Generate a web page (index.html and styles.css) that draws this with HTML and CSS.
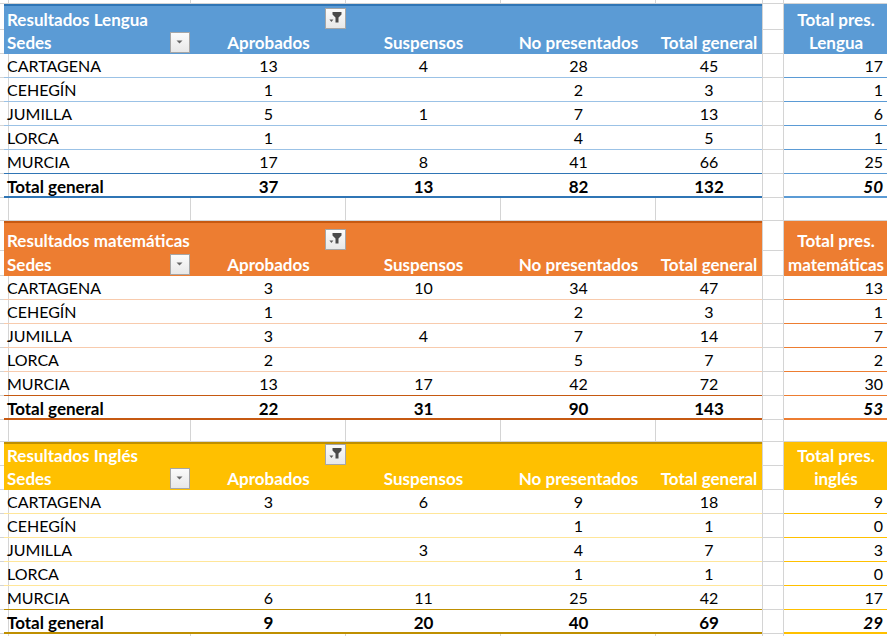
FILE: index.html
```html
<!DOCTYPE html>
<html lang="es">
<head>
<meta charset="utf-8">
<title>Resultados por sedes</title>
<link rel="stylesheet" href="styles.css">
</head>
<body>
<div class="sheet">
  <div class="row r-top">
    <div class="cell grid"></div><div class="cell grid"></div><div class="cell grid"></div><div class="cell grid"></div><div class="cell grid"></div><div class="cell grid nr"></div><div class="cell gap"></div><div class="cell grid nr"></div>
  </div>

  <section class="pivot blue">
    <div class="row r-title">
      <div class="cell grid"></div>
      <div class="cell hd title"><span>Resultados Lengua</span><span class="filter-btn"><svg viewBox="0 0 19 19" width="19" height="19"><path d="M6.5 3h9v2.6l-3 3v4.9h-3V8.6l-3-3z" fill="#4a4a4a"/><path d="M3.4 10.6h4l-2 2.4z" fill="#5a5a5a"/></svg></span></div>
      <div class="cell hd"></div><div class="cell hd"></div><div class="cell hd"></div>
      <div class="cell gap"></div>
      <div class="cell hd side">Total pres.</div>
    </div>
    <div class="row r-head">
      <div class="cell grid"></div>
      <div class="cell hd sedes"><span>Sedes</span><span class="drop-btn"><svg viewBox="0 0 18 19" width="18" height="19"><path d="M5.5 7.5h6l-3 3z" fill="#666"/></svg></span></div>
      <div class="cell hd">Aprobados</div>
      <div class="cell hd">Suspensos</div>
      <div class="cell hd">No presentados</div>
      <div class="cell hd">Total general</div>
      <div class="cell gap"></div>
      <div class="cell hd side">Lengua</div>
    </div>
    <div class="row">
      <div class="cell grid"></div><div class="cell d name">CARTAGENA</div><div class="cell d">13</div><div class="cell d">4</div><div class="cell d">28</div><div class="cell d">45</div><div class="cell gap"></div><div class="cell d tp">17</div>
    </div>
    <div class="row">
      <div class="cell grid"></div><div class="cell d name">CEHEGÍN</div><div class="cell d">1</div><div class="cell d"></div><div class="cell d">2</div><div class="cell d">3</div><div class="cell gap"></div><div class="cell d tp">1</div>
    </div>
    <div class="row">
      <div class="cell grid"></div><div class="cell d name">JUMILLA</div><div class="cell d">5</div><div class="cell d">1</div><div class="cell d">7</div><div class="cell d">13</div><div class="cell gap"></div><div class="cell d tp">6</div>
    </div>
    <div class="row">
      <div class="cell grid"></div><div class="cell d name">LORCA</div><div class="cell d">1</div><div class="cell d"></div><div class="cell d">4</div><div class="cell d">5</div><div class="cell gap"></div><div class="cell d tp">1</div>
    </div>
    <div class="row last">
      <div class="cell grid"></div><div class="cell d name">MURCIA</div><div class="cell d">17</div><div class="cell d">8</div><div class="cell d">41</div><div class="cell d">66</div><div class="cell gap"></div><div class="cell d tp">25</div>
    </div>
    <div class="row total">
      <div class="cell grid"></div><div class="cell d name">Total general</div><div class="cell d">37</div><div class="cell d">13</div><div class="cell d">82</div><div class="cell d">132</div><div class="cell gap"></div><div class="cell d tp">50</div>
    </div>
  </section>

  <div class="row r-blank">
    <div class="cell grid"></div><div class="cell grid"></div><div class="cell grid"></div><div class="cell grid"></div><div class="cell grid"></div><div class="cell grid nr"></div><div class="cell gap"></div><div class="cell grid nr"></div>
  </div>

  <section class="pivot orange">
    <div class="row r-title">
      <div class="cell grid"></div>
      <div class="cell hd title"><span>Resultados matemáticas</span><span class="filter-btn"><svg viewBox="0 0 19 19" width="19" height="19"><path d="M6.5 3h9v2.6l-3 3v4.9h-3V8.6l-3-3z" fill="#4a4a4a"/><path d="M3.4 10.6h4l-2 2.4z" fill="#5a5a5a"/></svg></span></div>
      <div class="cell hd"></div><div class="cell hd"></div><div class="cell hd"></div>
      <div class="cell gap"></div>
      <div class="cell hd side">Total pres.</div>
    </div>
    <div class="row r-head">
      <div class="cell grid"></div>
      <div class="cell hd sedes"><span>Sedes</span><span class="drop-btn"><svg viewBox="0 0 18 19" width="18" height="19"><path d="M5.5 7.5h6l-3 3z" fill="#666"/></svg></span></div>
      <div class="cell hd">Aprobados</div>
      <div class="cell hd">Suspensos</div>
      <div class="cell hd">No presentados</div>
      <div class="cell hd">Total general</div>
      <div class="cell gap"></div>
      <div class="cell hd side">matemáticas</div>
    </div>
    <div class="row">
      <div class="cell grid"></div><div class="cell d name">CARTAGENA</div><div class="cell d">3</div><div class="cell d">10</div><div class="cell d">34</div><div class="cell d">47</div><div class="cell gap"></div><div class="cell d tp">13</div>
    </div>
    <div class="row">
      <div class="cell grid"></div><div class="cell d name">CEHEGÍN</div><div class="cell d">1</div><div class="cell d"></div><div class="cell d">2</div><div class="cell d">3</div><div class="cell gap"></div><div class="cell d tp">1</div>
    </div>
    <div class="row">
      <div class="cell grid"></div><div class="cell d name">JUMILLA</div><div class="cell d">3</div><div class="cell d">4</div><div class="cell d">7</div><div class="cell d">14</div><div class="cell gap"></div><div class="cell d tp">7</div>
    </div>
    <div class="row">
      <div class="cell grid"></div><div class="cell d name">LORCA</div><div class="cell d">2</div><div class="cell d"></div><div class="cell d">5</div><div class="cell d">7</div><div class="cell gap"></div><div class="cell d tp">2</div>
    </div>
    <div class="row last">
      <div class="cell grid"></div><div class="cell d name">MURCIA</div><div class="cell d">13</div><div class="cell d">17</div><div class="cell d">42</div><div class="cell d">72</div><div class="cell gap"></div><div class="cell d tp">30</div>
    </div>
    <div class="row total">
      <div class="cell grid"></div><div class="cell d name">Total general</div><div class="cell d">22</div><div class="cell d">31</div><div class="cell d">90</div><div class="cell d">143</div><div class="cell gap"></div><div class="cell d tp">53</div>
    </div>
  </section>

  <div class="row r-blank short">
    <div class="cell grid"></div><div class="cell grid"></div><div class="cell grid"></div><div class="cell grid"></div><div class="cell grid"></div><div class="cell grid nr"></div><div class="cell gap"></div><div class="cell grid nr"></div>
  </div>

  <section class="pivot gold">
    <div class="row r-title">
      <div class="cell grid"></div>
      <div class="cell hd title"><span>Resultados Inglés</span><span class="filter-btn"><svg viewBox="0 0 19 19" width="19" height="19"><path d="M6.5 3h9v2.6l-3 3v4.9h-3V8.6l-3-3z" fill="#4a4a4a"/><path d="M3.4 10.6h4l-2 2.4z" fill="#5a5a5a"/></svg></span></div>
      <div class="cell hd"></div><div class="cell hd"></div><div class="cell hd"></div>
      <div class="cell gap"></div>
      <div class="cell hd side">Total pres.</div>
    </div>
    <div class="row r-head">
      <div class="cell grid"></div>
      <div class="cell hd sedes"><span>Sedes</span><span class="drop-btn"><svg viewBox="0 0 18 19" width="18" height="19"><path d="M5.5 7.5h6l-3 3z" fill="#666"/></svg></span></div>
      <div class="cell hd">Aprobados</div>
      <div class="cell hd">Suspensos</div>
      <div class="cell hd">No presentados</div>
      <div class="cell hd">Total general</div>
      <div class="cell gap"></div>
      <div class="cell hd side">inglés</div>
    </div>
    <div class="row">
      <div class="cell grid"></div><div class="cell d name">CARTAGENA</div><div class="cell d">3</div><div class="cell d">6</div><div class="cell d">9</div><div class="cell d">18</div><div class="cell gap"></div><div class="cell d tp">9</div>
    </div>
    <div class="row">
      <div class="cell grid"></div><div class="cell d name">CEHEGÍN</div><div class="cell d"></div><div class="cell d"></div><div class="cell d">1</div><div class="cell d">1</div><div class="cell gap"></div><div class="cell d tp">0</div>
    </div>
    <div class="row">
      <div class="cell grid"></div><div class="cell d name">JUMILLA</div><div class="cell d"></div><div class="cell d">3</div><div class="cell d">4</div><div class="cell d">7</div><div class="cell gap"></div><div class="cell d tp">3</div>
    </div>
    <div class="row">
      <div class="cell grid"></div><div class="cell d name">LORCA</div><div class="cell d"></div><div class="cell d"></div><div class="cell d">1</div><div class="cell d">1</div><div class="cell gap"></div><div class="cell d tp">0</div>
    </div>
    <div class="row last">
      <div class="cell grid"></div><div class="cell d name">MURCIA</div><div class="cell d">6</div><div class="cell d">11</div><div class="cell d">25</div><div class="cell d">42</div><div class="cell gap"></div><div class="cell d tp">17</div>
    </div>
    <div class="row total">
      <div class="cell grid"></div><div class="cell d name">Total general</div><div class="cell d">9</div><div class="cell d">20</div><div class="cell d">40</div><div class="cell d">69</div><div class="cell gap"></div><div class="cell d tp">29</div>
    </div>
  </section>

  <div class="row r-tail">
    <div class="cell grid"></div><div class="cell grid"></div><div class="cell grid"></div><div class="cell grid"></div><div class="cell grid"></div><div class="cell grid nr"></div><div class="cell gap"></div><div class="cell grid nr"></div>
  </div>
</div>
</body>
</html>
```

FILE: styles.css
```css
* { box-sizing: border-box; margin: 0; padding: 0; }

html, body {
  width: 887px;
  height: 636px;
  overflow: hidden;
  background: #fff;
}

body {
  font-family: Lato, "Liberation Sans", sans-serif;
  font-size: 16px;
  color: #000;
}

.sheet {
  display: flex;
  flex-direction: column;
  width: 888px;
}

.pivot { display: flex; flex-direction: column; }

.blue   { --accent: #5b9bd5; --dark: #2f75b5; --light: #9bc2e6; }
.orange { --accent: #ed7d31; --dark: #c65911; --light: #f8cbad; }
.gold   { --accent: #ffc000; --dark: #bf8f00; --light: #ffe699; }

.row {
  display: grid;
  grid-template-columns: 4px 187px 155px 155px 155px 106px 22px 104px;
  height: 24px;
}

.r-top { height: 4px; }
.r-tail { height: 2px; }
.r-blank { height: 23px; }
.r-blank.short { height: 22px; }
.blue .r-title { height: 26px; }
.blue .r-head { height: 24px; }
.orange .r-title { height: 30px; }
.orange .r-head { height: 25px; }
.gold .r-title { height: 24px; }
.gold .r-head { height: 24px; }

.cell {
  display: flex;
  align-items: flex-end;
  justify-content: center;
  padding: 0 4px 3px;
  line-height: 16px;
  white-space: nowrap;
  overflow: hidden;
}

.grid {
  border-right: 1px solid #d4d4d4;
  border-bottom: 1px solid #d4d4d4;
}
.grid.nr { border-right: none; }

.gap {
  border-left: 1px solid #d4d4d4;
  border-right: 1px solid #d4d4d4;
  border-bottom: 1px solid #d4d4d4;
}

.hd {
  background: var(--accent);
  color: #fff;
  font-weight: 700;
  font-size: 17px;
  padding-bottom: 3px;
}

.r-title .hd { padding-bottom: 2px; }
.r-title .hd:not(.side) { border-top: 2px solid var(--dark); }

.title {
  grid-column: span 2;
  justify-content: space-between;
  padding-left: 3px;
  padding-right: 0;
  overflow: visible;
}

.sedes {
  justify-content: space-between;
  padding-left: 3px;
  padding-right: 1px;
  overflow: visible;
}

.filter-btn,
.drop-btn {
  display: flex;
  align-self: flex-end;
  border: 1px solid #a6a6a6;
  background: linear-gradient(#fbfbfb, #e8e8e8);
}

.filter-btn { width: 21px; height: 21px; margin-bottom: -1px; }
.drop-btn { width: 20px; height: 21px; margin-bottom: -2px; }

.d { border-bottom: 1px solid var(--light); }
.last .d { border-bottom-color: var(--dark); }
.total .d {
  border-bottom: 2px solid var(--dark);
  font-weight: 700;
  font-size: 17px;
  padding-bottom: 1px;
}

.name { justify-content: flex-start; padding-left: 3px; }

.d.tp {
  justify-content: flex-end;
  padding-right: 5px;
  border-bottom-color: var(--accent);
}
.total .d.tp {
  border-bottom-color: var(--accent);
  font-style: italic;
}
```
